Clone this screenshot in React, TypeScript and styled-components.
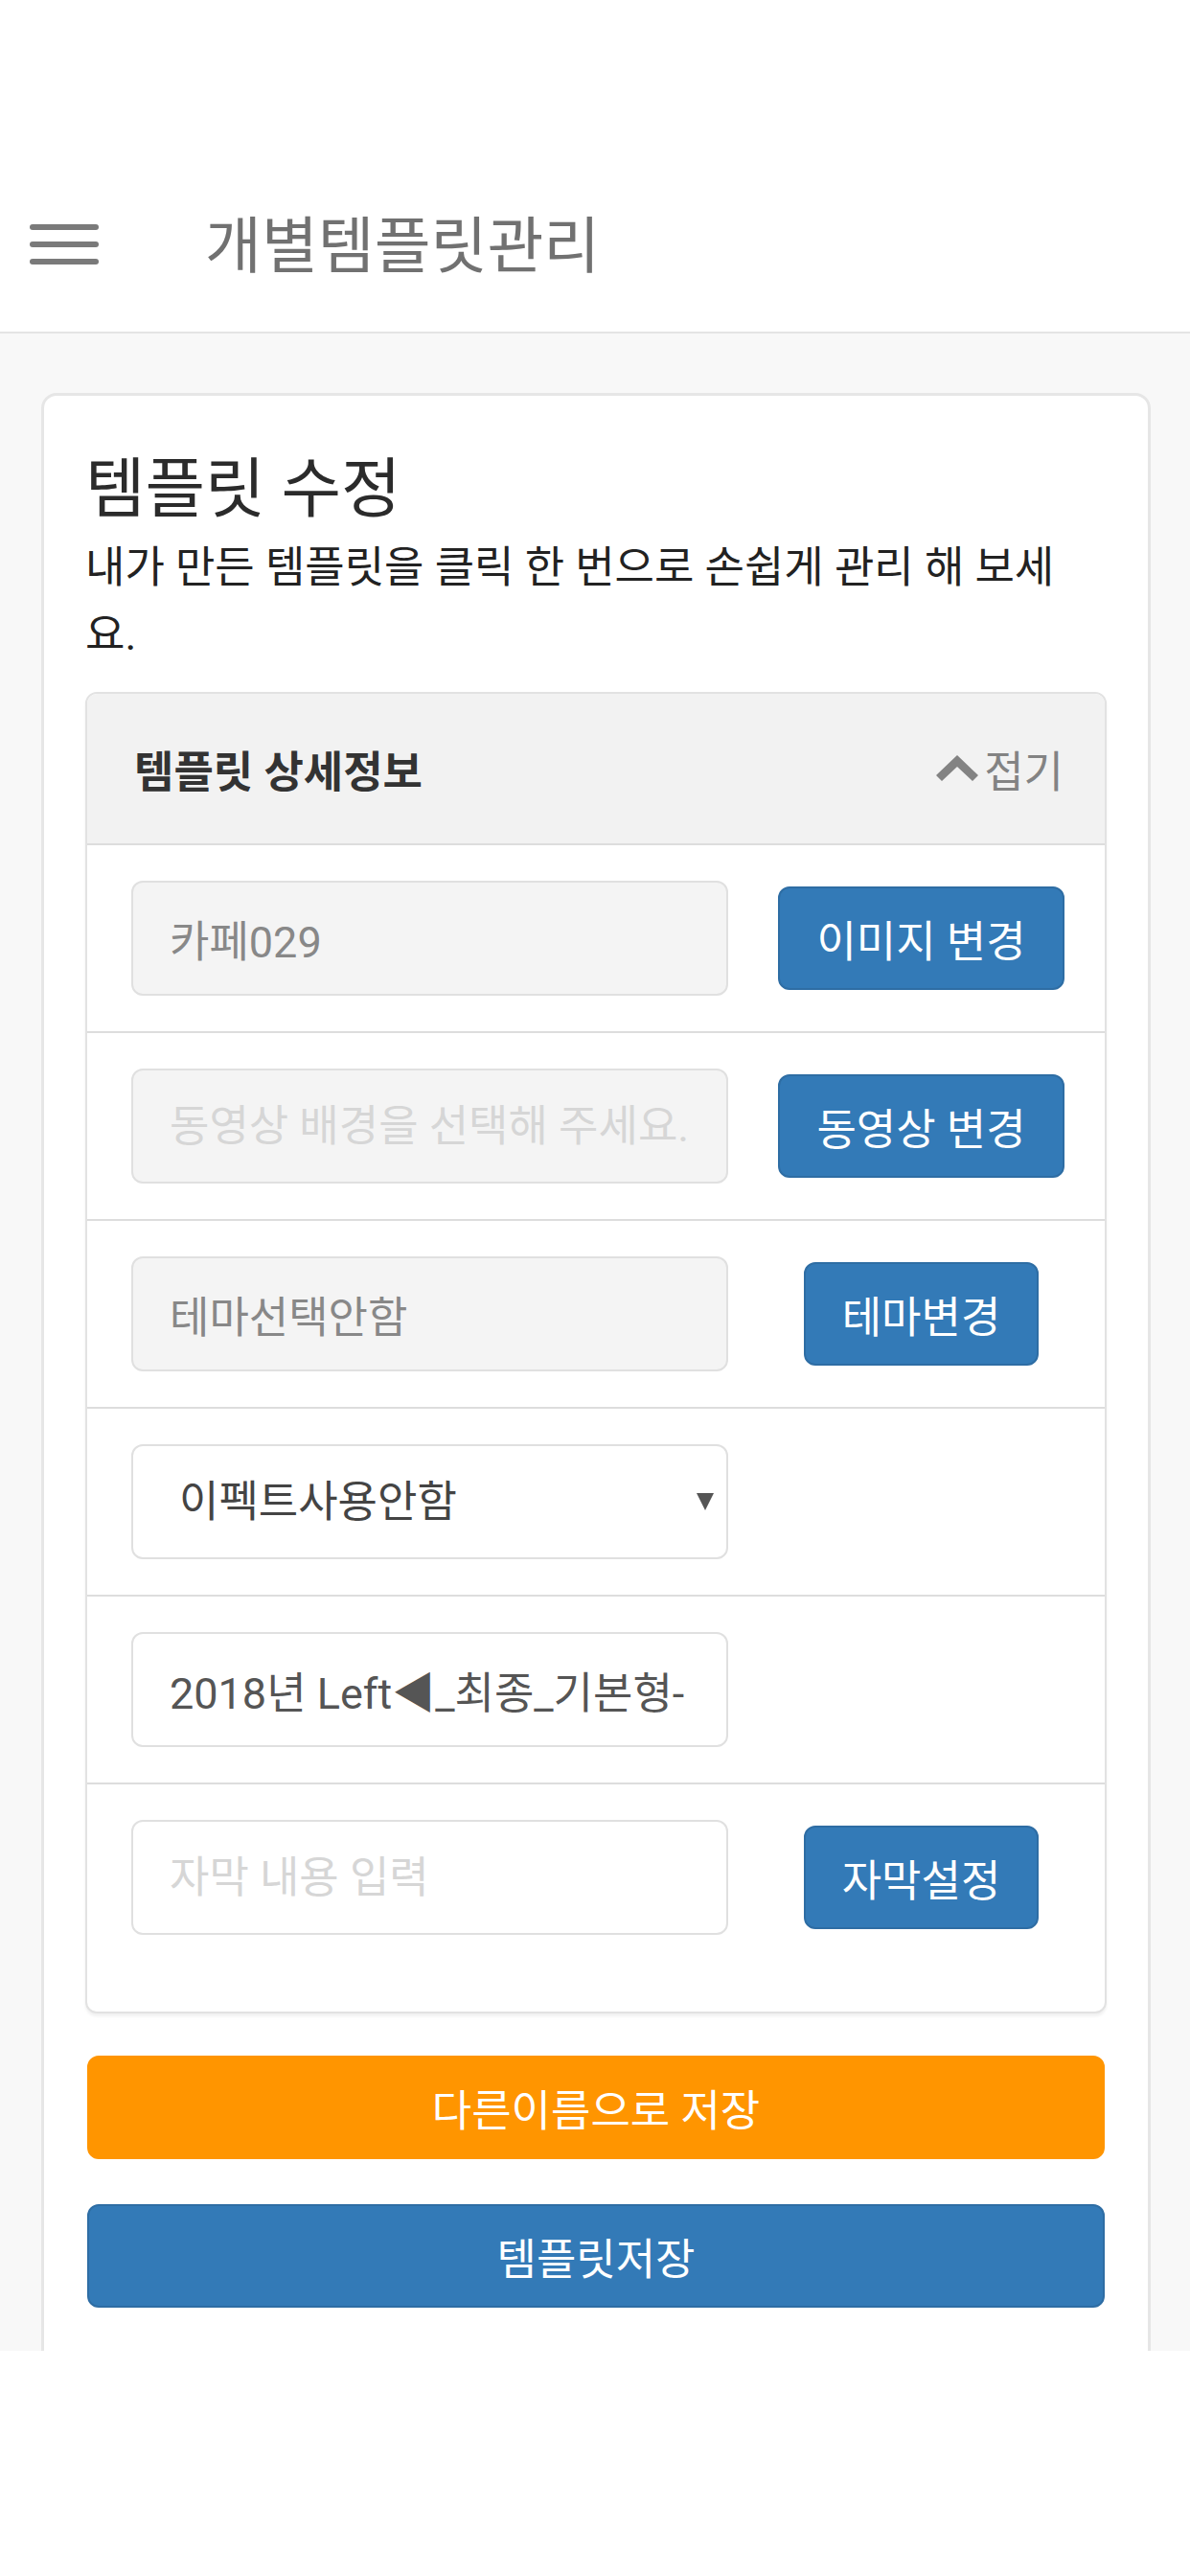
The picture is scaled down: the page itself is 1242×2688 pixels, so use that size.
import React from "react";
import styled, { createGlobalStyle } from "styled-components";

const GlobalStyle = createGlobalStyle`
  html, body {
    margin: 0;
    padding: 0;
    background: #ffffff;
  }
  body {
    font-family: Roboto, "Noto Sans CJK KR", sans-serif;
    width: 1242px;
  }
  * { box-sizing: border-box; }
`;

const FONT = `Roboto, "Noto Sans CJK KR", sans-serif`;

const Page = styled.div`
  width: 1242px;
  display: flex;
  flex-direction: column;
  background: #ffffff;
`;

const StatusSpace = styled.div`
  height: 170px;
  background: #ffffff;
`;

const NavBar = styled.header`
  height: 178px;
  display: flex;
  align-items: center;
  padding: 0 0 0 31px;
  background: #ffffff;
  border-bottom: 2px solid #e4e4e4;
  gap: 111px;
`;

const Burger = styled.button`
  width: 72px;
  height: 42px;
  padding: 0;
  margin: 0 0 6px 0;
  border: none;
  background: transparent;
  display: flex;
  flex-direction: column;
  justify-content: space-between;
`;

const BurgerLine = styled.span`
  display: block;
  width: 72px;
  height: 6px;
  border-radius: 3px;
  background: #7a7a7a;
`;

const NavTitle = styled.h1`
  margin: 0;
  font-family: ${FONT};
  font-size: 64px;
  font-weight: 400;
  color: #717171;
  line-height: 1;
`;

const Main = styled.main`
  height: 2105px;
  overflow: hidden;
  background: #f8f8f8;
  padding: 62px 0 0 43px;
`;

const Card = styled.section`
  width: 1158px;
  background: #ffffff;
  border: 3px solid #e6e6e6;
  border-radius: 16px;
  padding: 60px 43px 220px 43px;
`;

const Heading = styled.h2`
  margin: 0;
  font-family: ${FONT};
  font-size: 68px;
  font-weight: 400;
  line-height: 76px;
  color: #2b2b2b;
`;

const Lead = styled.p`
  margin: 9px 0 0 0;
  max-width: 1045px;
  font-family: ${FONT};
  font-size: 45px;
  line-height: 70px;
  color: #222222;
`;

const Panel = styled.div`
  margin-top: 24px;
  border: 2px solid #e2e2e2;
  border-radius: 12px;
  background: #ffffff;
  overflow: hidden;
  box-shadow: 0 3px 3px rgba(0, 0, 0, 0.06);
  padding-bottom: 43px;
`;

const PanelHead = styled.div`
  height: 158px;
  display: flex;
  align-items: center;
  justify-content: space-between;
  padding: 0 43px 0 49px;
  background: #f2f2f2;
  border-bottom: 2px solid #dddddd;
`;

const PanelTitle = styled.span`
  font-family: ${FONT};
  font-size: 45px;
  font-weight: 700;
  color: #333333;
`;

const Fold = styled.span`
  display: flex;
  align-items: center;
  gap: 6px;
  font-family: ${FONT};
  font-size: 45px;
  color: #838383;
`;

const Row = styled.div<{ $last?: boolean }>`
  height: ${(p) => (p.$last ? "194px" : "196px")};
  display: grid;
  grid-template-columns: 623px 1fr;
  align-items: center;
  padding-left: 46px;
  border-bottom: ${(p) => (p.$last ? "none" : "2px solid #dddddd")};
`;

const Field = styled.input<{ $filled?: boolean }>`
  width: 623px;
  height: 120px;
  margin: 0;
  padding: 0 38px;
  border: 2px solid #e0e0e0;
  border-radius: 12px;
  font-family: ${FONT};
  font-size: 45px;
  color: ${(p) => (p.$filled ? "#555555" : "#888888")};
  background: ${(p) => (p.readOnly ? "#f4f4f4" : "#ffffff")};
  outline: none;
  &::placeholder {
    color: #d6d6d6;
  }
`;

const SelectBox = styled.div`
  width: 623px;
  height: 120px;
  display: flex;
  align-items: center;
  padding: 0 13px 0 48px;
  border: 2px solid #e0e0e0;
  border-radius: 12px;
  background: #ffffff;
`;

const SelectControl = styled.select`
  flex: 1;
  appearance: none;
  -webkit-appearance: none;
  border: none;
  background: transparent;
  padding: 0;
  margin: 0;
  font-family: ${FONT};
  font-size: 45px;
  color: #444444;
  outline: none;
`;

const Action = styled.div`
  display: flex;
  justify-content: center;
  align-items: center;
  padding-left: 10px;
`;

const Btn = styled.button`
  height: 108px;
  padding: 0 38px;
  border: 2px solid #2e6da4;
  border-radius: 12px;
  background: #337ab7;
  color: #ffffff;
  font-family: ${FONT};
  font-size: 45px;
  white-space: nowrap;
`;

const WideBtn = styled.button<{ $tone: "orange" | "blue" }>`
  display: block;
  width: 1062px;
  height: 108px;
  margin: ${(p) => (p.$tone === "orange" ? "44px 0 0 2px" : "47px 0 0 2px")};
  border: 2px solid ${(p) => (p.$tone === "orange" ? "#ff9500" : "#2e6da4")};
  border-radius: 12px;
  background: ${(p) => (p.$tone === "orange" ? "#ff9500" : "#337ab7")};
  color: #ffffff;
  font-family: ${FONT};
  font-size: 45px;
`;

const Footer = styled.div`
  height: 235px;
  background: #ffffff;
`;

const ChevronUp = () => (
  <svg width="44" height="28" viewBox="0 0 44 28" aria-hidden="true">
    <polygon points="22,0 44,21 38,27 22,12 6,27 0,21" fill="#838383" />
  </svg>
);

const CaretDown = () => (
  <svg width="18" height="18" viewBox="0 0 18 18" aria-hidden="true">
    <polygon points="0,0 18,0 9,18" fill="#555555" />
  </svg>
);

export default function App() {
  return (
    <Page>
      <GlobalStyle />
      <StatusSpace />
      <NavBar>
        <Burger aria-label="menu">
          <BurgerLine />
          <BurgerLine />
          <BurgerLine />
        </Burger>
        <NavTitle>개별템플릿관리</NavTitle>
      </NavBar>
      <Main>
        <Card>
          <Heading>템플릿 수정</Heading>
          <Lead>내가 만든 템플릿을 클릭 한 번으로 손쉽게 관리 해 보세요.</Lead>
          <Panel>
            <PanelHead>
              <PanelTitle>템플릿 상세정보</PanelTitle>
              <Fold>
                <ChevronUp />
                접기
              </Fold>
            </PanelHead>
            <Row>
              <Field readOnly value="카페029" />
              <Action>
                <Btn>이미지 변경</Btn>
              </Action>
            </Row>
            <Row>
              <Field readOnly placeholder="동영상 배경을 선택해 주세요." />
              <Action>
                <Btn>동영상 변경</Btn>
              </Action>
            </Row>
            <Row>
              <Field readOnly value="테마선택안함" />
              <Action>
                <Btn>테마변경</Btn>
              </Action>
            </Row>
            <Row>
              <SelectBox>
                <SelectControl defaultValue="none">
                  <option value="none">이펙트사용안함</option>
                </SelectControl>
                <CaretDown />
              </SelectBox>
              <Action />
            </Row>
            <Row>
              <Field $filled defaultValue="2018년 Left◀_최종_기본형-" />
              <Action />
            </Row>
            <Row $last>
              <Field placeholder="자막 내용 입력" />
              <Action>
                <Btn>자막설정</Btn>
              </Action>
            </Row>
          </Panel>
          <WideBtn $tone="orange">다른이름으로 저장</WideBtn>
          <WideBtn $tone="blue">템플릿저장</WideBtn>
        </Card>
      </Main>
      <Footer />
    </Page>
  );
}
